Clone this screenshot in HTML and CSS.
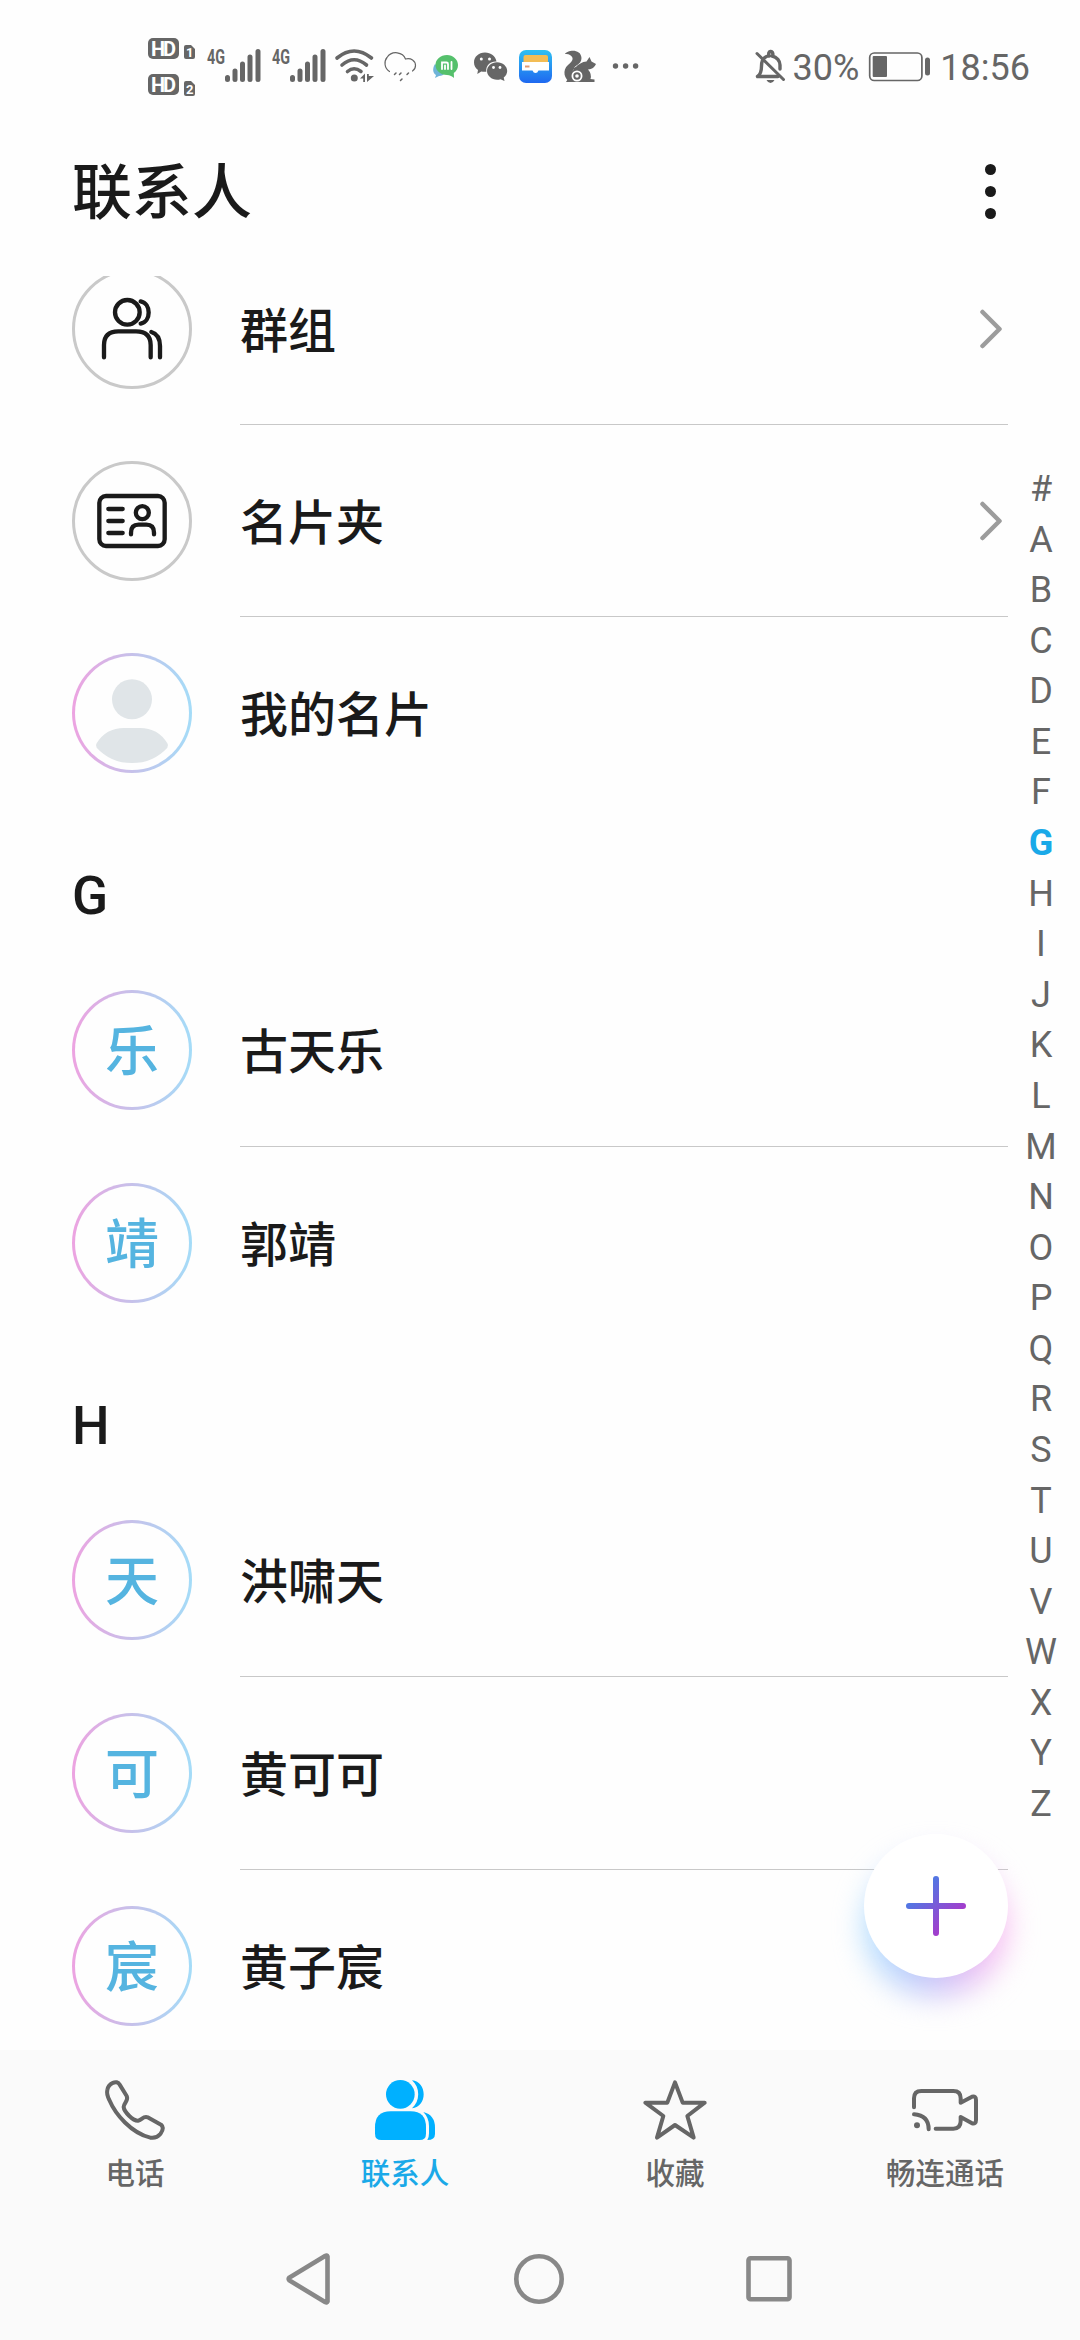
FILE: index.html
```html
<!DOCTYPE html>
<html lang="zh-CN">
  <head>
    <meta charset="UTF-8" />
    <meta name="viewport" content="width=device-width, initial-scale=1.0" />
    <title>联系人</title>
    <link rel="stylesheet" href="styles.css" />
  </head>
  <body>
    <div class="screen">
      <!-- Status bar -->
      <div class="status-bar">
        <svg width="52" height="75" viewBox="148 30 52 75">
          <rect x="148" y="38" width="31" height="21" rx="5" />
          <rect x="148" y="74" width="31" height="21" rx="5" />
          <path d="M184 47q0-2 2-2h5l4 4v8q0 2-2 2h-7q-2 0-2-2z" />
          <path d="M184 83q0-2 2-2h5l4 4v9q0 2-2 2h-7q-2 0-2-2z" />
          <text class="hd" x="151" y="55.5" textLength="25">HD</text>
          <text class="hd" x="151" y="91.5" textLength="25">HD</text>
          <text class="sim" x="186" y="57">1</text>
          <text class="sim" x="186" y="93.5">2</text>
        </svg>
        <svg width="65" height="75" viewBox="200 30 65 75">
          <text class="net" x="207" y="64" textLength="18" lengthAdjust="spacingAndGlyphs">4G</text>
          <path class="bars" d="M227.5 77.5v2M235 71v8.5M242.5 64v15.5M250 57v22.5M258 51.5v28" />
        </svg>
        <svg width="65" height="75" viewBox="200 30 65 75">
          <text class="net" x="207" y="64" textLength="18" lengthAdjust="spacingAndGlyphs">4G</text>
          <path class="bars" d="M227.5 77.5v2M235 71v8.5M242.5 64v15.5M250 57v22.5M258 51.5v28" />
        </svg>
        <svg width="50" height="75" viewBox="330 30 50 75">
          <path class="wifi" d="M337 58Q354 44 371.5 58M342 65Q354 54.5 366.5 65M347.5 71.5Q354 66 361 71.5" />
          <circle cx="354.3" cy="78" r="3.5" />
          <path d="M360 78.5l5-5v8.5h-1.800v-3.500zM367 82v-8h1.800v2h5.200z" />
        </svg>
        <svg width="45" height="75" viewBox="380 30 45 75">
          <path class="cloud" d="M389.5 71.5C384 68 384 61 387 57.5C392 50 403 52 405.5 59C411 57.5 415.5 61 415.5 65.5Q415.5 69 412.5 71" />
          <path class="rain" d="M394.5 74.5l1.500-1.500M399.5 74.5l1.500-1.500M407 74.5l1.500-1.500M400.5 80.5l1.500-1.500" />
        </svg>
        <svg width="40" height="75" viewBox="425 30 40 75">
          <path fill="#6fb4d8" d="M435 64C432 69 433 73 436 75l-1 3 4-2q4 0 6-3z" />
          <path fill="#55c06c" d="M447 55C440.5 55 435.5 59.5 435.5 65S440.5 75 447 75q2 0 4 1 2 1 3 2l-.2-5C456.5 71 458 68.5 458 65c0-5.500-5-10-11-10z" />
          <path class="mi" d="M442 69v-6.500h4.500q1.500 0 1.500 1.500v5M445 65.5v3.500M451.5 62v7" />
        </svg>
        <svg width="48" height="75" viewBox="465 30 48 75">
          <path d="M485 52.5c-6.500 0-11 4.500-11 9.700 0 3.500 1.500 6 4 7.800l-.7 4 4-2.500q2 .5 5 .3C485.5 65 491 61 496.5 61.5 495.5 56 491 52.500 485 52.500z" />
          <path d="M497 62.3c-5.500 0-10 4-10 8.700s4.500 8.700 10 8.700q2 0 3.500-.5l4 1.800-.8-3.500c2-1.500 3.500-4 3.500-6.500 0-4.700-4.500-8.700-10.200-8.700z" />
          <g fill="#fff">
            <circle cx="481.3" cy="59" r="1.5" />
            <circle cx="489.5" cy="59" r="1.5" />
            <circle cx="493.5" cy="67.5" r="1.4" />
            <circle cx="500" cy="67.5" r="1.4" />
          </g>
        </svg>
        <svg width="45" height="75" viewBox="513 30 45 75">
          <defs>
            <linearGradient id="wallet" x1="0" y1="0" x2="0" y2="1">
              <stop offset="0" stop-color="#2fc0f2" />
              <stop offset="1" stop-color="#1e68f0" />
            </linearGradient>
          </defs>
          <rect x="519" y="50" width="33" height="33" rx="7" fill="url(#wallet)" />
          <rect x="523.5" y="55" width="24.5" height="9" rx="2" fill="#f3bd55" />
          <path fill="#fff" d="M522 62h27v8.500h-10.500q-1 2.500-3 2.500t-3-2.500H522z" />
          <path stroke="#e39a72" stroke-width="2" d="M525 66.5h4.500" />
        </svg>
        <svg width="46" height="75" viewBox="558 30 46 75">
          <path d="M565 54C567 50 581 48 581.500 58C581.500 65 574 65 573 70L571 82C564 80 562 70 568 65C572 62 575 58 570 55Q568 53.500 565 54z" />
          <path d="M575 68Q580 62 586.5 61.500L589.5 57 591.5 61.5 596 64Q594 69 588 69.5Q592 74 590.5 79L594.5 79.5V82H566L569 77Q571 72 575 68z" />
          <path class="line" stroke-width="1.5" d="M573 69Q581 64.500 586 71Q589 75 587 81" stroke="#fff" />
          <circle cx="577" cy="76" r="4.600" fill="#666" stroke="#fff" stroke-width="1.800" />
          <circle cx="577" cy="76" r="1.800" fill="#fff" />
        </svg>
        <svg width="46" height="75" viewBox="604 30 46 75">
          <circle cx="615.5" cy="66" r="2.700" />
          <circle cx="625.6" cy="66" r="2.700" />
          <circle cx="635.6" cy="66" r="2.700" />
        </svg>
        <svg class="bell" width="43" height="75" viewBox="750 30 43 75">
          <path class="bell-line" d="M757.5 76.5Q761.5 74 761.5 66C761.5 61 763 58 766.5 56.500M769 56Q768 52 770.5 51.500T773 56M772 56C777 57 780 61 780 65V69M758 76.500H778" />
          <path class="bell-slash" d="M757 53.500L783.5 79.500" />
          <path d="M766.5 80h8q-1.500 3-4 3t-4-3z" />
        </svg>
        <span class="status-text">30%</span>
        <svg class="battery" width="63" height="75" viewBox="868 30 63 75">
          <rect class="line" x="869.7" y="53" width="52.2" height="27.5" rx="4.5" stroke-width="1.7" />
          <rect x="872.7" y="56" width="14.3" height="21" rx="1" />
          <rect x="925" y="57.5" width="5" height="18" rx="2.5" />
        </svg>
        <span class="status-text">18:56</span>
      </div>

      <!-- Header -->
      <header class="header">
        <h1>联系人</h1>
        <div class="more"><i></i><i></i><i></i></div>
      </header>

      <!-- Contact list -->
      <main class="main">
        <div class="list">
          <div class="row entry first">
            <div class="avatar plain">
              <svg width="114" height="114" viewBox="75 396 342 342">
                <circle cx="232" cy="517" r="37" />
                <path d="M272 484C304 490 304 545 272 551M162 652V615Q162 574 205 574H258Q302 574 302 615V652M304 576Q330 584 330 618V652" />
              </svg>
            </div>
            <div class="name">群组</div>
            <svg class="chevron" width="22" height="40" viewBox="0 0 22 40">
              <path d="M2.500 3L19.500 20L2.500 37" />
            </svg>
          </div>
          <div class="row entry">
            <div class="avatar plain">
              <svg width="114" height="114" viewBox="75 72 342 342">
                <rect x="148" y="168" width="196" height="150" rx="20" />
                <circle cx="277" cy="218" r="19.5" />
                <path d="M175 207H218M175 243H218M175 279H218M243 283V278Q243 254 266 254H289Q312 254 312 278V283" />
              </svg>
            </div>
            <div class="name">名片夹</div>
            <svg class="chevron" width="22" height="40" viewBox="0 0 22 40">
              <path d="M2.500 3L19.500 20L2.500 37" />
            </svg>
          </div>
          <div class="row entry last">
            <div class="avatar person">
              <svg width="114" height="114" viewBox="75 648 342 342">
                <circle cx="246" cy="778" r="60" />
                <path d="M140 923Q135 917 140 910Q168 864 222 864H270Q324 864 352 910Q357 917 352 923Q310 969 246 969T140 923z" />
              </svg>
            </div>
            <div class="name">我的名片</div>
          </div>

          <h2>G</h2>
          <div class="row">
            <div class="avatar"><span>乐</span></div>
            <div class="name">古天乐</div>
          </div>
          <div class="row last">
            <div class="avatar"><span>靖</span></div>
            <div class="name">郭靖</div>
          </div>

          <h2>H</h2>
          <div class="row">
            <div class="avatar"><span>天</span></div>
            <div class="name">洪啸天</div>
          </div>
          <div class="row">
            <div class="avatar"><span>可</span></div>
            <div class="name">黄可可</div>
          </div>
          <div class="row last">
            <div class="avatar"><span>宸</span></div>
            <div class="name">黄子宸</div>
          </div>
        </div>

        <div class="index">
          <span>#</span><span>A</span><span>B</span><span>C</span><span>D</span>
          <span>E</span><span>F</span><span class="current">G</span><span>H</span>
          <span>I</span><span>J</span><span>K</span><span>L</span><span>M</span>
          <span>N</span><span>O</span><span>P</span><span>Q</span><span>R</span>
          <span>S</span><span>T</span><span>U</span><span>V</span><span>W</span>
          <span>X</span><span>Y</span><span>Z</span>
        </div>

        <!-- Add button -->
        <div class="fab">
          <svg width="144" height="144" viewBox="0 0 144 144">
            <defs>
              <linearGradient id="plus" gradientUnits="userSpaceOnUse" x1="56" y1="56" x2="88" y2="88">
                <stop offset="0" stop-color="#4f79e4" />
                <stop offset="1" stop-color="#a63bcb" />
              </linearGradient>
            </defs>
            <circle cx="72" cy="72" r="72" fill="#fff" />
            <path d="M72 45V99M45 72H99" stroke="url(#plus)" stroke-width="6" stroke-linecap="round" />
          </svg>
        </div>
      </main>

      <!-- Bottom tabs -->
      <nav class="tabs">
        <div class="tab">
          <svg width="60" height="60" viewBox="165 120 180 180">
            <path d="M172 150C175 130 201 118 209 134L230 168C237 181 222 188 221 201C222 215 249 243 264 242C275 240 280 227 293 232L333 254C343 262 337 274 331 282Q319 296 301 293C244 279 196 223 178 180Q169 162 172 150z" />
          </svg>
          <span>电话</span>
        </div>
        <div class="tab active">
          <svg width="60" height="60" viewBox="975 120 180 180">
            <circle cx="1051" cy="163" r="43" />
            <path d="M1086 121C1109 123 1121 142 1121 163S1109 203 1086 205C1111 184 1111 142 1086 121z" />
            <path d="M975 262Q975 214 1022 214H1082Q1128 214 1128 262V281Q1128 300 1109 300H994Q975 300 975 281z" />
            <path d="M1120 216Q1155 225 1155 263V282Q1155 300 1132 300Q1137 293 1137 280V258Q1137 233 1120 216z" />
          </svg>
          <span>联系人</span>
        </div>
        <div class="tab">
          <svg width="64" height="60" viewBox="129 120 192 180">
            <path d="M225 127L248 188H314L262 228L281 293L225 255L171 293L190 228L136 188H202z" />
          </svg>
          <span>收藏</span>
        </div>
        <div class="tab">
          <svg width="66" height="60" viewBox="936 120 198 180">
            <path d="M942 202V175Q942 153 964 153H1060Q1082 153 1082 175V188L1116 170Q1128 167 1128 180V240Q1128 253 1116 250L1082 231V243Q1082 266 1060 266H1007M942 223Q986 226 986 268" />
            <circle class="dot" cx="951" cy="256" r="9" />
          </svg>
          <span>畅连通话</span>
        </div>
      </nav>

      <!-- System navigation -->
      <div class="sysnav">
        <svg width="50" height="54" viewBox="0 0 50 54">
          <path d="M43.5 4.500V49.500Q43 51 41 50L5.500 28.500Q4 27 5.500 25.500L41 4Q43 3 43.5 4.500z" />
        </svg>
        <svg width="54" height="54" viewBox="0 0 54 54">
          <circle cx="27" cy="27" r="22.7" />
        </svg>
        <svg width="50" height="54" viewBox="0 0 50 54">
          <rect x="4.5" y="6.3" width="41" height="41" rx="2" />
        </svg>
      </div>
    </div>
  </body>
</html>
```

FILE: styles.css
```css
body {
  margin: 0;
  background-color: #fefefe;
  color: #1a1a1a;
  font-family: Roboto, "Noto Sans CJK SC", sans-serif;
}

svg {
  display: block;
  flex: none;
}

.screen {
  display: flex;
  flex-direction: column;
  width: 1080px;
  height: 2340px;
  overflow: hidden;
}

/* Status bar */
.status-bar {
  display: flex;
  height: 75px;
  padding: 30px 50px 0 148px;
}

.status-bar svg {
  fill: #666;
}

.status-bar .hd {
  fill: #fff;
  font-size: 20px;
  font-weight: 700;
}

.status-bar .sim {
  fill: #fff;
  font-size: 13px;
  font-weight: 700;
}

.net {
  font-size: 21px;
  font-weight: 700;
}

.bars,
.wifi,
.cloud,
.rain,
.mi,
.line,
.bell-line,
.bell-slash {
  fill: none;
  stroke: #666;
  stroke-linecap: round;
}

.bars {
  stroke-width: 5;
}

.wifi {
  stroke-width: 3.6;
}

.cloud {
  stroke-width: 1.2;
}

.rain {
  stroke-width: 1.5;
}

.mi {
  stroke: #fff;
  stroke-width: 1.8;
}

.bell-line {
  stroke-width: 3.4;
}

.bell-slash {
  stroke-width: 3;
}

.bell {
  margin-left: auto;
}

.battery {
  margin: 0 9px 0 9px;
}

.status-text {
  color: #666;
  font-size: 36px;
  line-height: 76px;
}

/* Header */
.header {
  display: flex;
  align-items: center;
  justify-content: space-between;
  height: 171px;
  padding: 0 84px 0 72px;
  box-sizing: border-box;
}

h1 {
  margin: 6px 0 0;
  font-size: 60px;
  font-weight: 500;
  line-height: 174px;
}

.more {
  display: flex;
  flex-direction: column;
  gap: 11px;
  padding-top: 2px;
}

.more i {
  width: 11px;
  height: 11px;
  border-radius: 50%;
  background-color: #1a1a1a;
}

/* List */
.main {
  position: relative;
  display: flex;
  height: 1774px;
  overflow: hidden;
}

.list {
  width: 936px;
  padding-left: 72px;
}

.row {
  display: flex;
  align-items: center;
  height: 193px;
  box-sizing: border-box;
  padding-bottom: 1px;
  /* divider starts after the avatar */
  background: linear-gradient(#c8c8c8, #c8c8c8) right bottom / 768px 1px no-repeat;
}

.entry {
  height: 192px;
  padding-bottom: 0;
}

/* the list is scrolled a little under the header */
.first {
  margin-top: -43px;
}

.last {
  height: 192px;
  padding-bottom: 0;
  background: none;
}

.avatar {
  display: flex;
  align-items: center;
  justify-content: center;
  width: 120px;
  height: 120px;
  margin-right: 48px;
  box-sizing: border-box;
  border: 3px solid transparent;
  border-radius: 50%;
  background:
    linear-gradient(#fefefe, #fefefe) padding-box,
    linear-gradient(90deg, #eda3e1, #c6c1ea 50%, #a4dcf8) border-box;
  color: #55b4e0;
  font-size: 54px;
  font-weight: 500;
  line-height: 114px;
}

.avatar span {
  margin-top: 5px;
}

.plain {
  border-color: #c9c9c9;
  background: none;
}

.plain svg {
  fill: none;
  stroke: #1a1a1a;
  stroke-width: 13;
  stroke-linecap: round;
}

.person svg {
  fill: #e0e5e8;
}

.name {
  flex: 1;
  padding-top: 6px;
  font-size: 48px;
  font-weight: 500;
  line-height: 72px;
}

.chevron {
  margin-right: 6px;
  fill: none;
  stroke: #9c9c9c;
  stroke-width: 4.5;
  stroke-linecap: round;
  stroke-linejoin: round;
}

h2 {
  margin: 0;
  height: 145px;
  font-size: 53px;
  font-weight: 500;
  line-height: 174px;
}

/* Letter index */
.index {
  display: flex;
  flex-direction: column;
  width: 66px;
  padding-top: 188px;
  color: #666;
  font-size: 36px;
  text-align: center;
}

.index span {
  height: 50.58px;
  line-height: 50.58px;
}

.index .current {
  color: #1aa9e8;
  font-weight: 700;
}

/* Add button */
.fab {
  position: absolute;
  top: 1558px;
  left: 864px;
  width: 144px;
  height: 144px;
}

.fab svg {
  position: relative;
}

.fab::before {
  content: "";
  position: absolute;
  top: 22px;
  left: 2px;
  width: 140px;
  height: 140px;
  border-radius: 50%;
  background: linear-gradient(90deg, #a5dcff, #c9c4f8 50%, #ffb4ee);
  filter: blur(15px);
}

/* Bottom tabs */
.tabs {
  display: flex;
  height: 168px;
  background-color: #fafafa;
}

.tab {
  display: flex;
  flex: 1;
  flex-direction: column;
  align-items: center;
  padding-top: 30px;
  color: #666;
  font-size: 29.5px;
  font-weight: 500;
}

.tab svg {
  overflow: visible;
  fill: none;
  stroke: #666;
  stroke-width: 12;
  stroke-linecap: round;
  stroke-linejoin: round;
}

.tab span {
  margin-top: 12px;
  line-height: 44px;
}

.tab .dot {
  fill: #666;
  stroke: none;
}

.active {
  color: #1aa9e8;
}

.active svg {
  fill: #00b0ff;
  stroke: none;
}

/* System navigation */
.sysnav {
  display: flex;
  justify-content: space-between;
  height: 88px;
  padding: 34px 286px 0 284px;
  background-color: #fafafa;
}

.sysnav svg {
  fill: none;
  stroke: #888;
  stroke-width: 4.6;
}
```
